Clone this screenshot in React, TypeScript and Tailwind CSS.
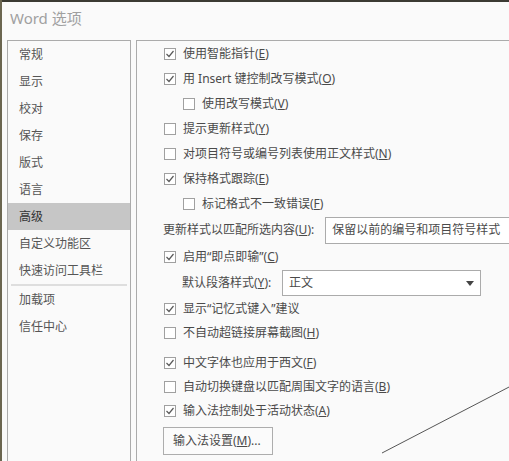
import React from "react";

const font = { fontFamily: '"Noto Sans", "Noto Sans CJK SC", sans-serif' };

const Box: React.FC<{ checked?: boolean }> = ({ checked }) => (
  <span className="w-[12px] h-[12px] border border-[#a0a0a0] bg-white flex items-center justify-center shrink-0">
    {checked && (
      <svg width="10" height="10" viewBox="0 0 10 10">
        <path d="M1.5 5 L4 7.5 L8.5 2" fill="none" stroke="#5a5a5a" strokeWidth="1.2" />
      </svg>
    )}
  </span>
);

const Check: React.FC<{ checked?: boolean; indent?: boolean; h?: string; children: React.ReactNode }> = ({
  checked,
  indent,
  h = "h-[25px]",
  children,
}) => (
  <div className={`flex items-center gap-[7px] ${h} ${indent ? "pl-[46px]" : "pl-[27px]"}`}>
    <Box checked={checked} />
    <span className="whitespace-nowrap">{children}</span>
  </div>
);

const nav = ["常规", "显示", "校对", "保存", "版式", "语言", "高级", "自定义功能区", "快速访问工具栏"];

export default function App() {
  return (
    <div
      className="w-[509px] h-[461px] bg-[#fafafa] overflow-hidden relative text-[12px] text-[#4a4a4a] border-l-2 border-[#6b6650]"
      style={font}
    >
      <div className="h-[2px] bg-[#3b3a33]" />
      <div className="h-[38px] pl-[8px] pt-[5px] text-[15px] text-[#a0a0a0]">Word 选项</div>
      <div className="flex h-[421px]">
        {/* left nav */}
        <div className="ml-[5px] w-[124px] shrink-0 border border-b-0 border-[#ababab] bg-[#fafafa]">
          {nav.map((n) => (
            <div
              key={n}
              className={`h-[27px] flex items-center pl-[11px] ${n === "高级" ? "bg-[#c6c6c6] text-[#333]" : "text-[#555]"}`}
            >
              {n}
            </div>
          ))}
          <div className="mx-[3px] h-[2px] bg-[#dedede]" />
          <div className="h-[27px] flex items-center pl-[11px] text-[#555]">加载项</div>
          <div className="h-[27px] flex items-center pl-[11px] text-[#555]">信任中心</div>
        </div>

        {/* right content */}
        <div className="ml-[5px] flex-1 min-w-0 overflow-hidden border-l border-t border-[#ababab]">
          <Check checked>
            使用智能指针(<u>E</u>)
          </Check>
          <Check checked>
            用 Insert 键控制改写模式(<u>O</u>)
          </Check>
          <Check indent>
            使用改写模式(<u>V</u>)
          </Check>
          <Check>
            提示更新样式(<u>Y</u>)
          </Check>
          <Check>
            对项目符号或编号列表使用正文样式(<u>N</u>)
          </Check>
          <Check checked>
            保持格式跟踪(<u>E</u>)
          </Check>
          <Check indent>
            标记格式不一致错误(<u>F</u>)
          </Check>
          <div className="h-[28px] flex items-center pl-[26px]">
            <span className="whitespace-nowrap">
              更新样式以匹配所选内容(<u>U</u>):
            </span>
            <div className="ml-[11px] h-[27px] w-[200px] shrink-0 border border-[#ababab] bg-white flex items-center pl-[6px] whitespace-nowrap">
              保留以前的编号和项目符号样式
            </div>
          </div>
          <Check checked>
            启用“即点即输”(<u>C</u>)
          </Check>
          <div className="h-[28px] flex items-center pl-[45px]">
            <span className="whitespace-nowrap w-[100px] shrink-0">
              默认段落样式(<u>Y</u>):
            </span>
            <div className="h-[26px] w-[199px] shrink-0 border border-[#ababab] bg-white flex items-center justify-between pl-[6px] pr-[6px]">
              <span>正文</span>
              <svg width="8" height="5" viewBox="0 0 8 5">
                <path d="M0 0 L8 0 L4 5 Z" fill="#444" />
              </svg>
            </div>
          </div>
          <Check checked h="h-[23px]">
            显示“记忆式键入”建议
          </Check>
          <Check h="h-[26px]">
            不自动超链接屏幕截图(<u>H</u>)
          </Check>
          <div className="h-[4px]" />
          <Check checked>
            中文字体也应用于西文(<u>F</u>)
          </Check>
          <Check h="h-[23px]">
            自动切换键盘以匹配周围文字的语言(<u>B</u>)
          </Check>
          <Check checked h="h-[26px]">
            输入法控制处于活动状态(<u>A</u>)
          </Check>
          <div className="pl-[26px] pt-[3px]">
            <div className="w-[110px] h-[28px] border border-[#adadad] bg-[#fbfbfb] flex items-center pl-[9px] whitespace-nowrap">
              输入法设置(<u>M</u>)...
            </div>
          </div>
        </div>
      </div>
      <svg className="absolute left-0 top-0 pointer-events-none" width="509" height="461">
        <line x1="380" y1="453" x2="509" y2="386" stroke="#555" strokeWidth="1" />
      </svg>
    </div>
  );
}
